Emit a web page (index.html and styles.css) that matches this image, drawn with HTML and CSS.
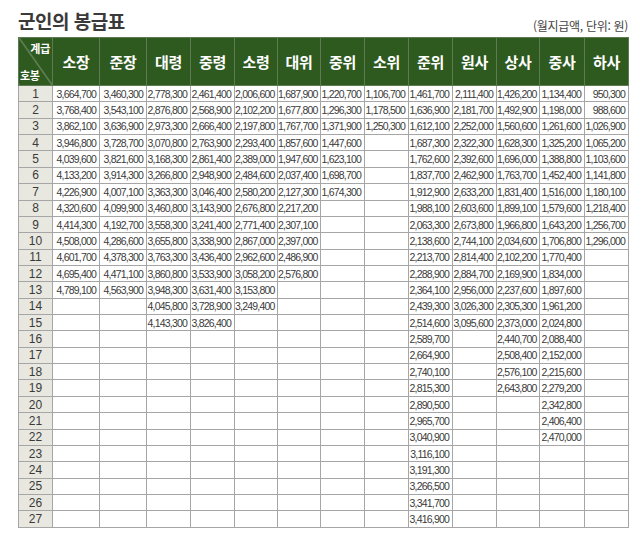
FILE: index.html
```html
<!DOCTYPE html>
<html lang="ko">
<head>
<meta charset="utf-8">
<title>군인의 봉급표</title>
<link rel="stylesheet" href="styles.css">
</head>
<body>
<div class="page">
  <div class="top">
    <h1 class="title">군인의 봉급표</h1>
    <span class="unit">(월지급액, 단위: 원)</span>
  </div>
  <table class="pay">
    <colgroup>
      <col class="c-no"><col class="w47"><col class="w47"><col class="w44"><col class="w44"><col class="w43"><col class="w43"><col class="w44"><col class="w44"><col class="w44"><col class="w44"><col class="w43"><col class="w45"><col class="w44">
    </colgroup>
    <thead>
      <tr>
        <th class="corner"><div class="corner-in"><span class="c-rank">계급</span><span class="c-step">호봉</span></div></th>
        <th>소장</th><th>준장</th><th>대령</th><th>중령</th><th>소령</th><th>대위</th><th>중위</th><th>소위</th><th>준위</th><th>원사</th><th>상사</th><th>중사</th><th>하사</th>
      </tr>
    </thead>
    <tbody>
      <tr><td class="no">1</td><td>3,664,700</td><td>3,460,300</td><td>2,778,300</td><td>2,461,400</td><td>2,006,600</td><td>1,687,900</td><td>1,220,700</td><td>1,106,700</td><td>1,461,700</td><td>2,111,400</td><td>1,426,200</td><td>1,134,400</td><td>950,300</td></tr>
      <tr><td class="no">2</td><td>3,768,400</td><td>3,543,100</td><td>2,876,800</td><td>2,568,900</td><td>2,102,200</td><td>1,677,800</td><td>1,296,300</td><td>1,178,500</td><td>1,636,900</td><td>2,181,700</td><td>1,492,900</td><td>1,198,000</td><td>988,600</td></tr>
      <tr><td class="no">3</td><td>3,862,100</td><td>3,636,900</td><td>2,973,300</td><td>2,666,400</td><td>2,197,800</td><td>1,767,700</td><td>1,371,900</td><td>1,250,300</td><td>1,612,100</td><td>2,252,000</td><td>1,560,600</td><td>1,261,600</td><td>1,026,900</td></tr>
      <tr><td class="no">4</td><td>3,946,800</td><td>3,728,700</td><td>3,070,800</td><td>2,763,900</td><td>2,293,400</td><td>1,857,600</td><td>1,447,600</td><td></td><td>1,687,300</td><td>2,322,300</td><td>1,628,300</td><td>1,325,200</td><td>1,065,200</td></tr>
      <tr><td class="no">5</td><td>4,039,600</td><td>3,821,600</td><td>3,168,300</td><td>2,861,400</td><td>2,389,000</td><td>1,947,600</td><td>1,623,100</td><td></td><td>1,762,600</td><td>2,392,600</td><td>1,696,000</td><td>1,388,800</td><td>1,103,600</td></tr>
      <tr><td class="no">6</td><td>4,133,200</td><td>3,914,300</td><td>3,266,800</td><td>2,948,900</td><td>2,484,600</td><td>2,037,400</td><td>1,698,700</td><td></td><td>1,837,700</td><td>2,462,900</td><td>1,763,700</td><td>1,452,400</td><td>1,141,800</td></tr>
      <tr><td class="no">7</td><td>4,226,900</td><td>4,007,100</td><td>3,363,300</td><td>3,046,400</td><td>2,580,200</td><td>2,127,300</td><td>1,674,300</td><td></td><td>1,912,900</td><td>2,633,200</td><td>1,831,400</td><td>1,516,000</td><td>1,180,100</td></tr>
      <tr><td class="no">8</td><td>4,320,600</td><td>4,099,900</td><td>3,460,800</td><td>3,143,900</td><td>2,676,800</td><td>2,217,200</td><td></td><td></td><td>1,988,100</td><td>2,603,600</td><td>1,899,100</td><td>1,579,600</td><td>1,218,400</td></tr>
      <tr><td class="no">9</td><td>4,414,300</td><td>4,192,700</td><td>3,558,300</td><td>3,241,400</td><td>2,771,400</td><td>2,307,100</td><td></td><td></td><td>2,063,300</td><td>2,673,800</td><td>1,966,800</td><td>1,643,200</td><td>1,256,700</td></tr>
      <tr><td class="no">10</td><td>4,508,000</td><td>4,286,600</td><td>3,655,800</td><td>3,338,900</td><td>2,867,000</td><td>2,397,000</td><td></td><td></td><td>2,138,600</td><td>2,744,100</td><td>2,034,600</td><td>1,706,800</td><td>1,296,000</td></tr>
      <tr><td class="no">11</td><td>4,601,700</td><td>4,378,300</td><td>3,763,300</td><td>3,436,400</td><td>2,962,600</td><td>2,486,900</td><td></td><td></td><td>2,213,700</td><td>2,814,400</td><td>2,102,200</td><td>1,770,400</td><td></td></tr>
      <tr><td class="no">12</td><td>4,695,400</td><td>4,471,100</td><td>3,860,800</td><td>3,533,900</td><td>3,058,200</td><td>2,576,800</td><td></td><td></td><td>2,288,900</td><td>2,884,700</td><td>2,169,900</td><td>1,834,000</td><td></td></tr>
      <tr><td class="no">13</td><td>4,789,100</td><td>4,563,900</td><td>3,948,300</td><td>3,631,400</td><td>3,153,800</td><td></td><td></td><td></td><td>2,364,100</td><td>2,956,000</td><td>2,237,600</td><td>1,897,600</td><td></td></tr>
      <tr><td class="no">14</td><td></td><td></td><td>4,045,800</td><td>3,728,900</td><td>3,249,400</td><td></td><td></td><td></td><td>2,439,300</td><td>3,026,300</td><td>2,305,300</td><td>1,961,200</td><td></td></tr>
      <tr><td class="no">15</td><td></td><td></td><td>4,143,300</td><td>3,826,400</td><td></td><td></td><td></td><td></td><td>2,514,600</td><td>3,095,600</td><td>2,373,000</td><td>2,024,800</td><td></td></tr>
      <tr><td class="no">16</td><td></td><td></td><td></td><td></td><td></td><td></td><td></td><td></td><td>2,589,700</td><td></td><td>2,440,700</td><td>2,088,400</td><td></td></tr>
      <tr><td class="no">17</td><td></td><td></td><td></td><td></td><td></td><td></td><td></td><td></td><td>2,664,900</td><td></td><td>2,508,400</td><td>2,152,000</td><td></td></tr>
      <tr><td class="no">18</td><td></td><td></td><td></td><td></td><td></td><td></td><td></td><td></td><td>2,740,100</td><td></td><td>2,576,100</td><td>2,215,600</td><td></td></tr>
      <tr><td class="no">19</td><td></td><td></td><td></td><td></td><td></td><td></td><td></td><td></td><td>2,815,300</td><td></td><td>2,643,800</td><td>2,279,200</td><td></td></tr>
      <tr><td class="no">20</td><td></td><td></td><td></td><td></td><td></td><td></td><td></td><td></td><td>2,890,500</td><td></td><td></td><td>2,342,800</td><td></td></tr>
      <tr><td class="no">21</td><td></td><td></td><td></td><td></td><td></td><td></td><td></td><td></td><td>2,965,700</td><td></td><td></td><td>2,406,400</td><td></td></tr>
      <tr><td class="no">22</td><td></td><td></td><td></td><td></td><td></td><td></td><td></td><td></td><td>3,040,900</td><td></td><td></td><td>2,470,000</td><td></td></tr>
      <tr><td class="no">23</td><td></td><td></td><td></td><td></td><td></td><td></td><td></td><td></td><td>3,116,100</td><td></td><td></td><td></td><td></td></tr>
      <tr><td class="no">24</td><td></td><td></td><td></td><td></td><td></td><td></td><td></td><td></td><td>3,191,300</td><td></td><td></td><td></td><td></td></tr>
      <tr><td class="no">25</td><td></td><td></td><td></td><td></td><td></td><td></td><td></td><td></td><td>3,266,500</td><td></td><td></td><td></td><td></td></tr>
      <tr><td class="no">26</td><td></td><td></td><td></td><td></td><td></td><td></td><td></td><td></td><td>3,341,700</td><td></td><td></td><td></td><td></td></tr>
      <tr><td class="no">27</td><td></td><td></td><td></td><td></td><td></td><td></td><td></td><td></td><td>3,416,900</td><td></td><td></td><td></td><td></td></tr>
    </tbody>
  </table>
</div>
</body>
</html>
```

FILE: styles.css
```css
* { box-sizing: border-box; }

body {
  margin: 0;
  background: #ffffff;
  color: #333333;
  font-family: "Liberation Sans", "Noto Sans CJK KR", sans-serif;
}

.page {
  width: 628px;
  padding: 6px 0 0 18px;
}

.top {
  display: flex;
  justify-content: space-between;
  align-items: flex-end;
  height: 26px;
  margin-bottom: 5px;
}

.title {
  margin: 0;
  font-family: "Noto Sans CJK KR", sans-serif;
  font-size: 19px;
  font-weight: bold;
  line-height: 23px;
  color: #3a3a3a;
  letter-spacing: -0.5px;
}

.unit {
  font-family: "Noto Sans CJK KR", sans-serif;
  font-size: 12px;
  line-height: 15px;
  color: #444444;
  letter-spacing: -0.3px;
  margin-bottom: -1px;
}

.pay {
  border-collapse: collapse;
  table-layout: fixed;
  width: 610px;
  border: 1px solid #8f8f8f;
}

.c-no { width: 34px; }
.w43 { width: 43px; }
.w44 { width: 44px; }
.w45 { width: 45px; }
.w47 { width: 47px; }

.pay th {
  height: 48px;
  padding: 0;
  background: #2e5a20;
  color: #ffffff;
  font-family: "Noto Sans CJK KR", sans-serif;
  font-size: 15px;
  font-weight: bold;
  text-align: center;
  border: 1px solid #5d7a52;
  letter-spacing: -0.3px;
}

.pay th.corner {
  background: linear-gradient(to top right, #2e5a20 calc(50% - 0.7px), #9fb096 50%, #2e5a20 calc(50% + 0.7px));
}

.corner-in {
  display: flex;
  flex-direction: column;
  justify-content: space-between;
  height: 46px;
  padding: 3px 2px 3px 1px;
  font-size: 11px;
  line-height: 13px;
}

.c-rank { align-self: flex-end; }
.c-step { align-self: flex-start; }

.pay td {
  height: 16.37px;
  padding: 0 3px 0 0;
  border: 1px solid #a6a6a6;
  font-family: "Liberation Sans", sans-serif;
  font-size: 10.5px;
  letter-spacing: -0.8px;
  line-height: 14px;
  color: #3a3a3a;
  text-align: right;
  white-space: nowrap;
  overflow: hidden;
}

.pay td.no {
  background: #e8e8e0;
  font-family: "Liberation Sans", sans-serif;
  font-size: 12px;
  letter-spacing: 0;
  text-align: center;
  padding: 0;
  color: #3a3a3a;
}
```
